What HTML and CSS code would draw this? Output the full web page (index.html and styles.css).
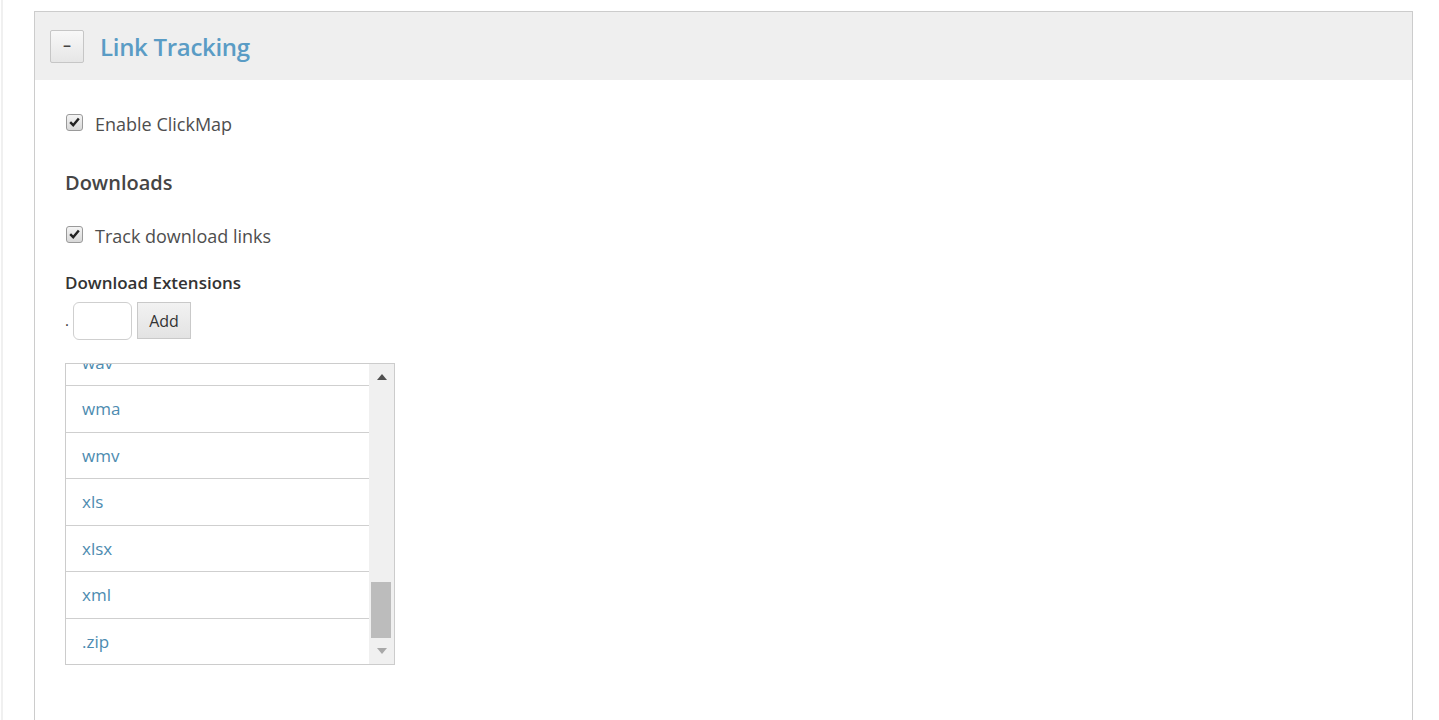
FILE: index.html
```html
<!doctype html>
<html>

<head>
  <title>Link Tracking</title>
  <meta name="viewport" content="width=device-width, initial-scale=1.0">
  <link rel="stylesheet" href="styles.css">
</head>

<body>
  <div class="page">
    <div class="panel">

      <!-- Panel header -->
      <div class="panel-header">
        <button class="toggle" type="button">&ndash;</button>
        <h1 class="panel-title">Link Tracking</h1>
      </div>

      <!-- Panel body -->
      <div class="panel-body">
        <label class="check-row first">
          <span class="check">
            <svg width="11" height="10" viewBox="0 0 11 10"><path d="M1.2 5.2 L4.2 8.2 L9.8 1.4" fill="none" stroke="#222" stroke-width="2.4"/></svg>
          </span>
          Enable ClickMap
        </label>

        <h2 class="section-title">Downloads</h2>

        <label class="check-row">
          <span class="check">
            <svg width="11" height="10" viewBox="0 0 11 10"><path d="M1.2 5.2 L4.2 8.2 L9.8 1.4" fill="none" stroke="#222" stroke-width="2.4"/></svg>
          </span>
          Track download links
        </label>

        <div class="field-label">Download Extensions</div>
        <div class="add-row">
          <span class="dot">.</span>
          <input class="ext-input" type="text">
          <button class="add-button" type="button">Add</button>
        </div>

        <!-- Extension list -->
        <div class="ext-list">
          <div class="ext-viewport">
            <ul class="ext-items">
              <li>wav</li>
              <li>wma</li>
              <li>wmv</li>
              <li>xls</li>
              <li>xlsx</li>
              <li>xml</li>
              <li>.zip</li>
            </ul>
          </div>
          <div class="scrollbar">
            <span class="arrow up"></span>
            <span class="track"><span class="thumb"></span></span>
            <span class="arrow down"></span>
          </div>
        </div>
      </div>

    </div>
  </div>
</body>

</html>
```

FILE: styles.css
```css
body {
  margin: 0;
  padding: 0;
  background-color: #fff;
  font-family: "Open Sans", "Noto Sans", sans-serif;
  color: #505050;
}

.page {
  margin-left: 1px;
  border-left: 2px solid #f0f0f0;
  padding: 11px 26px 0 31px;
  height: 709px;
}

.panel {
  border: 1px solid #cccccc;
  border-bottom: none;
  height: 100%;
  box-sizing: border-box;
}

.panel-header {
  display: flex;
  align-items: center;
  gap: 16px;
  height: 68px;
  padding: 0 15px;
  background-color: #efefef;
}

.toggle {
  width: 34px;
  height: 33px;
  padding: 0 0 3px;
  border: 1px solid #c6c6c6;
  border-radius: 2px;
  background: linear-gradient(#f8f8f8, #e6e6e6);
  font-family: "Open Sans", sans-serif;
  font-size: 16px;
  font-weight: 600;
  color: #444;
}

.panel-title {
  margin: 0;
  font-size: 24px;
  font-weight: 600;
  color: #5a9cc5;
  letter-spacing: -0.3px;
}

.panel-body {
  padding: 32px 30px 0;
}

.check-row {
  display: flex;
  align-items: center;
  gap: 12px;
  margin-top: 28px;
  font-size: 18px;
  line-height: 24px;
  color: #4e4e4e;
  padding-left: 1px;
}

.check-row.first {
  margin-top: 0;
}

.check {
  display: flex;
  align-items: center;
  justify-content: center;
  width: 15px;
  height: 15px;
  margin-top: -4px;
  border: 1px solid #9a9a9a;
  border-radius: 3px;
  background: linear-gradient(#f4f4f4, #d8d8d8);
}

.section-title {
  margin: 34px 0 0;
  font-size: 20px;
  line-height: 26px;
  font-weight: 600;
  color: #454545;
}

.field-label {
  margin-top: 24px;
  font-size: 17px;
  line-height: 22px;
  font-weight: 600;
  color: #333;
}

.add-row {
  display: flex;
  align-items: flex-start;
  margin-top: 8px;
  height: 38px;
}

.dot {
  width: 8px;
  padding-top: 8px;
  font-size: 15px;
  color: #333;
}

.ext-input {
  width: 59px;
  height: 38px;
  box-sizing: border-box;
  border: 1px solid #cfcfcf;
  border-radius: 6px;
  background: #fff;
}

.add-button {
  width: 54px;
  height: 37px;
  margin-left: 5px;
  border: 1px solid #c9c9c9;
  background: linear-gradient(#f2f2f2, #e3e3e3);
  font-family: "Open Sans", sans-serif;
  font-size: 16px;
  color: #333;
}

.ext-list {
  display: flex;
  width: 330px;
  height: 302px;
  margin-top: 23px;
  border: 1px solid #cccccc;
  box-sizing: border-box;
}

.ext-viewport {
  flex: 1;
  overflow: hidden;
}

.ext-items {
  list-style: none;
  margin: -24.5px 0 0;
  padding: 0;
}

.ext-items li {
  height: 45.5px;
  line-height: 45.5px;
  border-bottom: 1px solid #cfcfcf;
  padding-left: 16px;
  font-size: 17px;
  color: #4d8bb0;
}

.scrollbar {
  display: flex;
  flex-direction: column;
  width: 25px;
  background-color: #f0f0f0;
}

.arrow {
  display: flex;
  justify-content: center;
  align-items: center;
  height: 26px;
}

.arrow.up::before {
  content: "";
  border-left: 5px solid transparent;
  border-right: 5px solid transparent;
  border-bottom: 6px solid #505050;
}

.arrow.down::before {
  content: "";
  border-left: 5px solid transparent;
  border-right: 5px solid transparent;
  border-top: 6px solid #a8a8a8;
}

.track {
  flex: 1;
  display: flex;
  flex-direction: column;
  justify-content: flex-end;
  padding: 0 3px 0 2px;
}

.thumb {
  height: 56px;
  background-color: #bcbcbc;
}
```
